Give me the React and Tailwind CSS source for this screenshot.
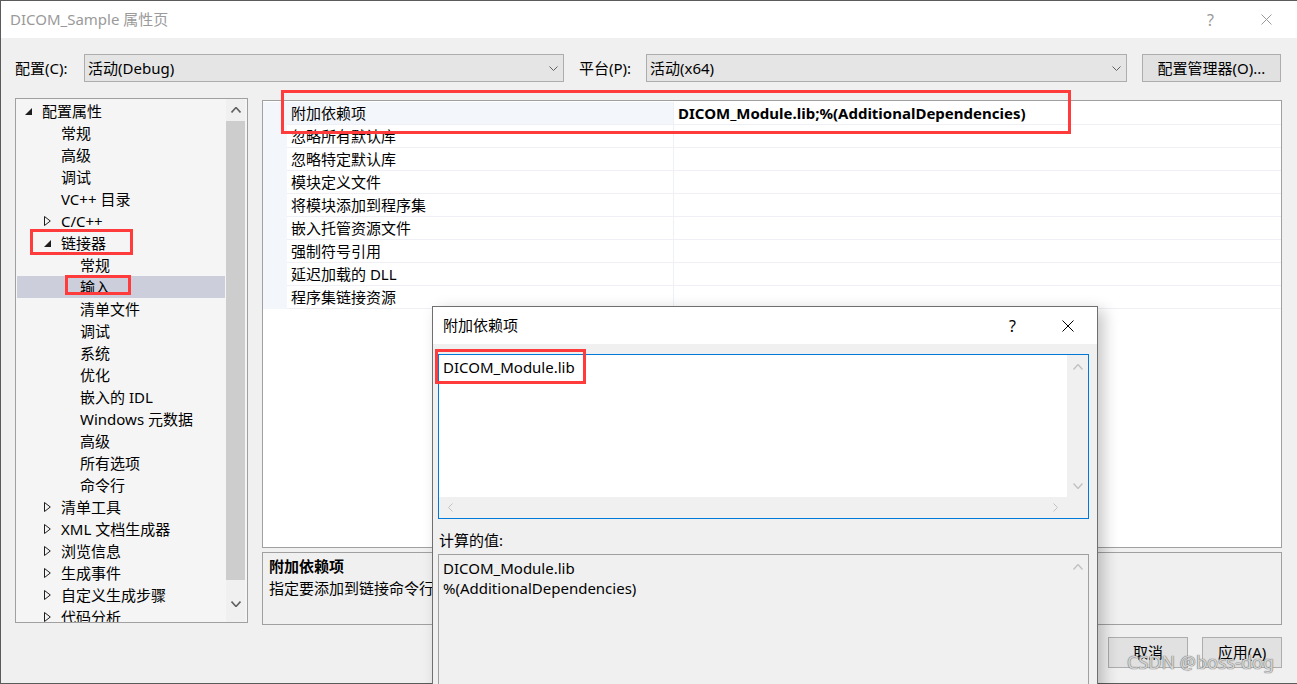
import React from "react";

const ChevronDown = ({ color = "#606060", w = 9, h = 5, sw = 1 }) => (
  <svg width={w} height={h} viewBox={`0 0 ${w} ${h}`} className="block">
    <polyline points={`0.5,0.5 ${w / 2},${h - 0.5} ${w - 0.5},0.5`} fill="none" stroke={color} strokeWidth={sw} />
  </svg>
);
const ChevronUp = ({ color = "#606060", w = 9, h = 5, sw = 1 }) => (
  <svg width={w} height={h} viewBox={`0 0 ${w} ${h}`} className="block">
    <polyline points={`0.5,${h - 0.5} ${w / 2},0.5 ${w - 0.5},${h - 0.5}`} fill="none" stroke={color} strokeWidth={sw} />
  </svg>
);
const ChevronLeft = ({ color = "#c2c2c2" }) => (
  <svg width="5" height="9" viewBox="0 0 5 9" className="block">
    <polyline points="4.5,0.5 0.5,4.5 4.5,8.5" fill="none" stroke={color} strokeWidth="1" />
  </svg>
);
const ChevronRight = ({ color = "#c2c2c2" }) => (
  <svg width="5" height="9" viewBox="0 0 5 9" className="block">
    <polyline points="0.5,0.5 4.5,4.5 0.5,8.5" fill="none" stroke={color} strokeWidth="1" />
  </svg>
);
const CloseX = ({ color = "#000", size = 12 }) => (
  <svg width={size} height={size} viewBox={`0 0 ${size} ${size}`} className="block">
    <line x1="0.5" y1="0.5" x2={size - 0.5} y2={size - 0.5} stroke={color} strokeWidth="1" />
    <line x1={size - 0.5} y1="0.5" x2="0.5" y2={size - 0.5} stroke={color} strokeWidth="1" />
  </svg>
);
const TriOpen = () => (
  <svg width="7" height="7" viewBox="0 0 7 7" className="block">
    <polygon points="7,0 7,7 0,7" fill="#1e1e1e" />
  </svg>
);
const TriClosed = () => (
  <svg width="7" height="10" viewBox="0 0 7 10" className="block">
    <polygon points="0.5,0.5 6.3,5 0.5,9.5" fill="none" stroke="#1e1e1e" strokeWidth="1" />
  </svg>
);

const treeItems = [
  { t: "配置属性", l: 0, e: "open" },
  { t: "常规", l: 1 },
  { t: "高级", l: 1 },
  { t: "调试", l: 1 },
  { t: "VC++ 目录", l: 1 },
  { t: "C/C++", l: 1, e: "closed" },
  { t: "链接器", l: 1, e: "open" },
  { t: "常规", l: 2 },
  { t: "输入", l: 2, sel: true },
  { t: "清单文件", l: 2 },
  { t: "调试", l: 2 },
  { t: "系统", l: 2 },
  { t: "优化", l: 2 },
  { t: "嵌入的 IDL", l: 2 },
  { t: "Windows 元数据", l: 2 },
  { t: "高级", l: 2 },
  { t: "所有选项", l: 2 },
  { t: "命令行", l: 2 },
  { t: "清单工具", l: 1, e: "closed" },
  { t: "XML 文档生成器", l: 1, e: "closed" },
  { t: "浏览信息", l: 1, e: "closed" },
  { t: "生成事件", l: 1, e: "closed" },
  { t: "自定义生成步骤", l: 1, e: "closed" },
  { t: "代码分析", l: 1, e: "closed" },
];

const indentClass = ["w-[8px]", "w-[27px]", "w-[46px]"];

const gridRows = [
  "附加依赖项",
  "忽略所有默认库",
  "忽略特定默认库",
  "模块定义文件",
  "将模块添加到程序集",
  "嵌入托管资源文件",
  "强制符号引用",
  "延迟加载的 DLL",
  "程序集链接资源",
];

function Dropdown({ text, widthClass }) {
  return (
    <div className={`${widthClass} h-full border border-[#adadad] bg-[#e5e5e5] flex items-center pl-[3px] pr-[5px]`}>
      <span className="flex-1 leading-none">{text}</span>
      <ChevronDown color="#606060" />
    </div>
  );
}

export default function App() {
  return (
    <div className="relative w-[1297px] h-[684px] overflow-hidden bg-[#f0f0f0] font-['Noto_Sans','Noto_Sans_CJK_SC',sans-serif] text-[15px] text-black">
      <div className="flex flex-col h-[684px] border-l border-t border-b border-[#5b5b5b]">
        {/* Title bar */}
        <div className="h-[37px] shrink-0 bg-white flex items-center pl-[9px] pr-[25px]">
          <span className="text-[15px] text-[#9a9a9a]">DICOM_Sample 属性页</span>
          <div className="ml-auto flex items-center">
            <span className="text-[16px] text-[#9a9a9a] leading-none">?</span>
            <div className="ml-[47px]">
              <CloseX color="#9a9a9a" size={11} />
            </div>
          </div>
        </div>

        {/* Config row */}
        <div className="mt-[16px] h-[28px] flex items-center pl-[14px] shrink-0">
          <span className="w-[69px]">配置(C):</span>
          <Dropdown text="活动(Debug)" widthClass="w-[480px]" />
          <span className="ml-[15px] w-[67px]">平台(P):</span>
          <Dropdown text="活动(x64)" widthClass="w-[481px]" />
          <div className="ml-[15px] w-[139px] h-full border border-[#adadad] bg-[#e1e1e1] flex items-center justify-center">
            配置管理器(O)...
          </div>
        </div>

        {/* Main area */}
        <div className="mt-[16px] flex items-start">
          {/* Tree */}
          <div className="ml-[14px] w-[233px] h-[525px] border border-[#a0a0a0] bg-[#f5f5f5] flex overflow-hidden">
            <div className="flex-1 pt-[1px] px-[1px] overflow-hidden">
              {treeItems.map((it, i) => (
                <div key={i} className={`h-[22px] flex items-center whitespace-nowrap ${it.sel ? "bg-[#cccedb]" : ""}`}>
                  <div className={`${indentClass[it.l]} shrink-0`} />
                  <div className="w-[17px] shrink-0 flex items-center">
                    {it.e === "open" ? <TriOpen /> : it.e === "closed" ? <TriClosed /> : null}
                  </div>
                  <span>{it.t}</span>
                </div>
              ))}
            </div>
            <div className="w-[19px] mr-[2px] bg-[#f0f0f0] flex flex-col items-center shrink-0">
              <div className="h-[22px] flex items-center justify-center">
                <ChevronUp color="#606060" w={10} h={6} sw={1.6} />
              </div>
              <div className="w-full h-[459px] bg-[#cdcdcd]" />
              <div className="flex-1 flex items-center justify-center pt-[6px]">
                <ChevronDown color="#606060" w={10} h={6} sw={1.6} />
              </div>
            </div>
          </div>

          {/* Right column */}
          <div className="ml-[14px] mt-[2px] w-[1020px] flex flex-col">
            {/* Property grid */}
            <div className="h-[448px] border border-[#a0a0a0] bg-white pt-[1px]">
              {gridRows.map((r, i) => (
                <div key={i} className="h-[23px] flex">
                  <div className="w-[24px] shrink-0 bg-[#f3f6fb]" />
                  <div className={`w-[387px] shrink-0 border-b border-r border-[#eef0f6] pl-[4px] flex items-center whitespace-nowrap ${i === 0 ? "bg-[#f3f6fb]" : ""}`}>
                    {r}
                  </div>
                  <div className="flex-1 border-b border-[#eef0f6] pl-[4px] flex items-center whitespace-nowrap font-bold">
                    {i === 0 ? "DICOM_Module.lib;%(AdditionalDependencies)" : ""}
                  </div>
                </div>
              ))}
            </div>

            {/* Description */}
            <div className="mt-[4px] h-[73px] border border-[#a0a0a0] bg-[#f0f0f0] pl-[6px] pt-[2px]">
              <div className="h-[22px] leading-[22px] font-bold">附加依赖项</div>
              <div className="h-[22px] leading-[22px]">指定要添加到链接命令行的附加项。</div>
            </div>

            {/* Buttons */}
            <div className="mt-[12px] flex justify-end gap-[14px] pr-[0px]">
              <div className="w-[80px] h-[31px] border border-[#adadad] bg-[#e1e1e1] flex items-center justify-center">取消</div>
              <div className="w-[80px] h-[31px] border border-[#adadad] bg-[#e1e1e1] flex items-center justify-center">应用(A)</div>
            </div>
          </div>
        </div>
      </div>

      {/* Annotation boxes */}
      <div className="absolute left-[281px] top-[90px] w-[790px] h-[44px] border-[3px] border-[#ff3b3b] pointer-events-none" />
      <div className="absolute left-[30px] top-[229px] w-[103px] h-[26px] border-[3px] border-[#ff3b3b] pointer-events-none" />
      <div className="absolute left-[65px] top-[275px] w-[66px] h-[20px] border-[3px] border-[#ff3b3b] pointer-events-none" />

      {/* Dialog */}
      <div className="absolute left-[432px] top-[306px] w-[666px] h-[400px] border border-[#6f6f6f] bg-[#f0f0f0] shadow-[6px_4px_14px_rgba(0,0,0,0.22)] flex flex-col">
        <div className="h-[37px] bg-white flex items-center pl-[10px] pr-[23px] shrink-0">
          <span>附加依赖项</span>
          <span className="ml-auto text-[16px] leading-none">?</span>
          <div className="ml-[46px]">
            <CloseX color="#000" size={12} />
          </div>
        </div>
        <div className="mt-[10px] ml-[5px] w-[651px] h-[165px] border border-[#0078d7] bg-[#f0f0f0] flex flex-col shrink-0">
          <div className="h-[142px] flex">
            <div className="flex-1 bg-white pl-[4px] pt-[1px]">
              <div className="h-[22px] leading-[22px]">DICOM_Module.lib</div>
            </div>
            <div className="w-[21px] flex flex-col items-center justify-between pt-[9px] pb-[8px]">
              <ChevronUp color="#c2c2c2" w={10} h={6} sw={1.4} />
              <ChevronDown color="#c2c2c2" w={10} h={6} sw={1.4} />
            </div>
          </div>
          <div className="flex-1 flex items-center pl-[9px] pr-[30px] justify-between">
            <ChevronLeft />
            <ChevronRight />
          </div>
        </div>
        <div className="mt-[10px] ml-[6px] h-[22px] leading-[22px]">计算的值:</div>
        <div className="mt-[3px] ml-[5px] w-[651px] flex-1 border border-[#a0a0a0] bg-[#f0f0f0] flex">
          <div className="flex-1 pl-[4px] pt-[3px]">
            <div className="h-[20px] leading-[20px]">DICOM_Module.lib</div>
            <div className="h-[20px] leading-[20px]">%(AdditionalDependencies)</div>
          </div>
          <div className="w-[21px] flex flex-col items-center pt-[9px]">
            <ChevronUp color="#c2c2c2" w={10} h={6} sw={1.4} />
          </div>
        </div>
      </div>

      <div className="absolute left-[435px] top-[349px] w-[151px] h-[35px] border-[3px] border-[#ff3b3b] pointer-events-none" />

      {/* Watermark */}
      <div className="absolute left-[1127px] top-[650px] text-[18px] leading-[24px] text-[#d4d4d4] [text-shadow:0_0_1px_#6a6a6a,0_0_1px_#6a6a6a] pointer-events-none whitespace-nowrap">
        CSDN @boss-dog
      </div>
    </div>
  );
}
